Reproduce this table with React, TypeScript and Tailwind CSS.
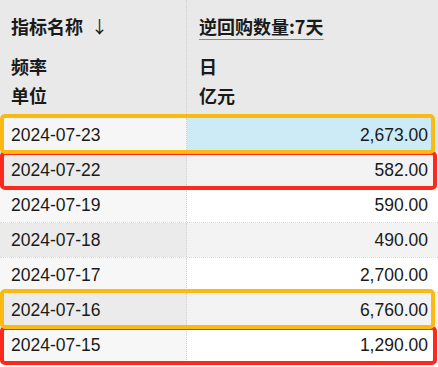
import React from "react";

type Row = { date: string; value: string; mark?: "yellow" | "red" };

const rows: Row[] = [
  { date: "2024-07-23", value: "2,673.00", mark: "yellow" },
  { date: "2024-07-22", value: "582.00", mark: "red" },
  { date: "2024-07-19", value: "590.00" },
  { date: "2024-07-18", value: "490.00" },
  { date: "2024-07-17", value: "2,700.00" },
  { date: "2024-07-16", value: "6,760.00", mark: "yellow" },
  { date: "2024-07-15", value: "1,290.00", mark: "red" },
];

const cjk = { fontFamily: '"Noto Sans CJK SC", "Noto Sans", sans-serif' };
const num = { fontFamily: '"Liberation Sans", Arial, sans-serif' };

export default function App() {
  return (
    <div className="w-[438px] h-[367px] bg-white overflow-hidden text-[#1a1a1a]">
      <div className="grid grid-cols-[187px_1fr] bg-[#e9e9e9] h-[118px]" style={cjk}>
        <div className="border-r border-dotted border-[#cfcfcf] pl-[11px] flex flex-col">
          <div className="h-[52px] flex items-center text-[18px] font-bold">
            <span>指标名称</span>
            <span className="ml-[8px] font-normal text-[17px]">↓</span>
          </div>
          <div className="h-[29px] flex items-center text-[18px] font-bold">频率</div>
          <div className="h-[29px] flex items-center text-[18px] font-bold">单位</div>
        </div>
        <div className="pl-[12px] flex flex-col">
          <div className="h-[52px] flex items-center text-[18px] font-bold">
            <span className="underline decoration-[#8a8a8a] decoration-1 underline-offset-[5px]">
              逆回购数量:7天
            </span>
          </div>
          <div className="h-[29px] flex items-center text-[18px] font-bold">日</div>
          <div className="h-[29px] flex items-center text-[18px] font-bold">亿元</div>
        </div>
      </div>
      <div style={num}>
        {rows.map((r, i) => {
          const even = i % 2 === 1;
          const first = i === 0;
          const leftBg = first ? "bg-[#f6f6f6]" : even ? "bg-[#ebebeb]" : "bg-[#f7f7f7]";
          const rightBg = first ? "bg-[#cdeaf7]" : even ? "bg-[#f3f3f3]" : "bg-white";
          return (
            <div key={r.date} className="relative grid grid-cols-[187px_1fr] h-[35px] border-b border-dotted border-[#dcdcdc]">
              <div className={`${leftBg} border-r border-dotted border-[#cfcfcf] pl-[11px] flex items-center text-[17.5px]`}>
                {r.date}
              </div>
              <div className={`${rightBg} pr-[10px] flex items-center justify-end text-[17.5px]`}>
                {r.value}
              </div>
              {r.mark === "yellow" && (
                <div className="absolute left-0 right-[3px] -top-[4px] -bottom-[2px] border-[4px] border-[#fcb90f] rounded-[5px] z-20 pointer-events-none" />
              )}
              {r.mark === "red" && (
                <div className="absolute left-0 right-[1px] -top-[2px] -bottom-[3px] border-[4px] border-[#fb2a1c] rounded-[5px] z-10 pointer-events-none" />
              )}
            </div>
          );
        })}
      </div>
    </div>
  );
}
